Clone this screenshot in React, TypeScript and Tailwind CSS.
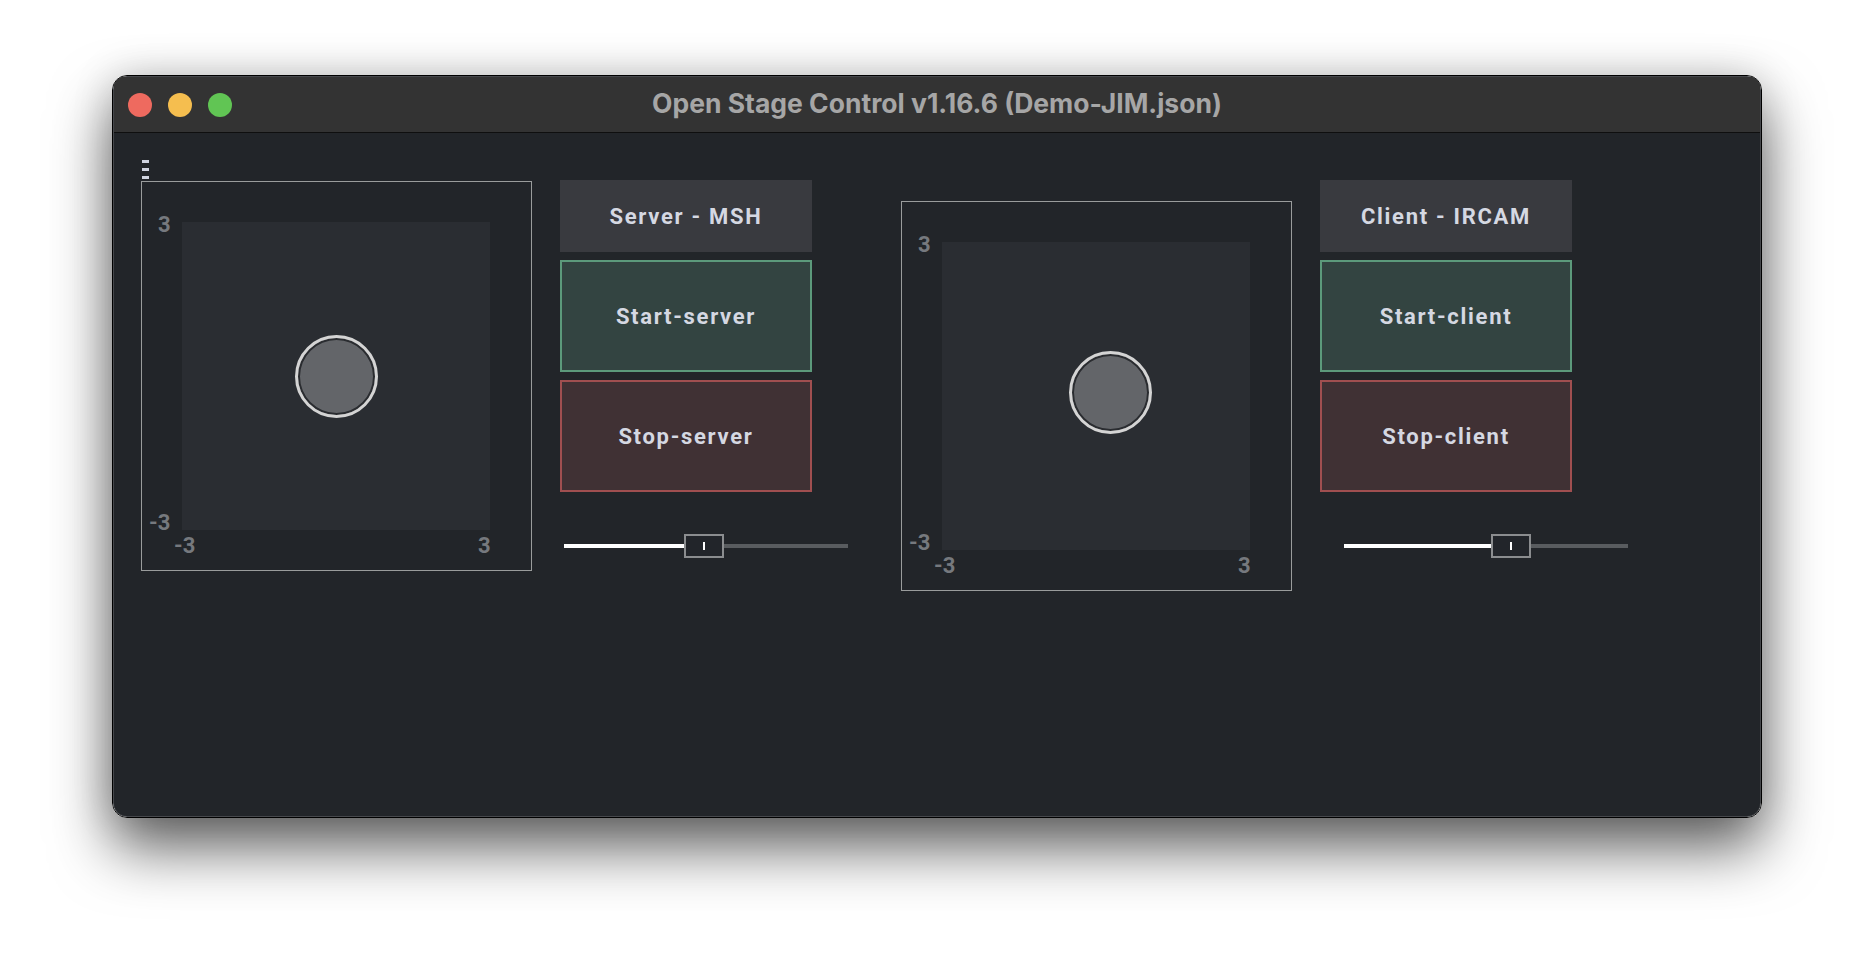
const widgetFont = { fontFamily: "Roboto, 'Noto Sans', sans-serif" };

function Dots() {
  return (
    <div className="ml-px flex w-[7px] flex-col gap-[5px]">
      <div className="h-[3px] bg-[#d0d4e0]" />
      <div className="h-[3px] bg-[#d0d4e0]" />
      <div className="h-[3px] bg-[#d0d4e0]" />
    </div>
  );
}

function XYPad({ knobLeft, knobTop }: { knobLeft: number; knobTop: number }) {
  const label = "absolute text-[22px] font-bold leading-none text-[#76797e]";
  return (
    <div className="relative h-[390px] w-[391px] border border-[#9a9c9c] pt-[40px] pl-[40px]" style={widgetFont}>
      <div className="relative h-[308px] w-[308px] bg-[#2a2d32]">
        <div
          className="absolute h-[83px] w-[83px] rounded-full border-[3px] border-[#d4d4d4] bg-[#636569] shadow-[inset_0_0_0_2px_#2a2c30]"
          style={{ left: knobLeft, top: knobTop }}
        />
      </div>
      <span className={`${label} left-[16px] top-[32px]`}>3</span>
      <span className={`${label} left-[7px] top-[330px]`}>-3</span>
      <span className={`${label} left-[32px] top-[353px]`}>-3</span>
      <span className={`${label} left-[336px] top-[353px]`}>3</span>
    </div>
  );
}

function Buttons({ title, start, stop }: { title: string; start: string; stop: string }) {
  const text = "text-[22px] font-bold tracking-[1.7px] text-[#d5d8e2]";
  return (
    <div className="flex w-[252px] flex-col gap-2" style={widgetFont}>
      <div className={`flex h-[72px] items-center justify-center bg-[#393a3f] ${text}`}>{title}</div>
      <div className={`flex h-[112px] items-center justify-center border-2 border-[#5c9a7b] bg-[#334441] ${text}`}>{start}</div>
      <div className={`flex h-[112px] items-center justify-center border-2 border-[#a04f50] bg-[#403134] ${text}`}>{stop}</div>
    </div>
  );
}

function Slider({ fill }: { fill: number }) {
  return (
    <div className="flex h-6 w-[284px] items-center">
      <div className="h-1 bg-white" style={{ width: fill }} />
      <div className="flex h-6 w-10 items-center justify-center border-2 border-[#8b8d8f] bg-[#22252a]">
        <div className="h-2 w-[2px] bg-white" />
      </div>
      <div className="h-1 flex-1 bg-[#595c5f]" />
    </div>
  );
}

export default function App() {
  return (
    <div className="min-h-screen w-full bg-white px-[112px] pt-[75px]">
      <div className="h-[743px] overflow-hidden rounded-[15px] border border-black shadow-[0_30px_60px_rgba(0,0,0,0.62),0_0_40px_rgba(0,0,0,0.15)]">
        <div className="flex h-full flex-col rounded-[14px] border border-[#ffffff2a] bg-[#222529]">
          <div className="relative flex h-[56px] shrink-0 items-center border-b border-[#0f0f0f] bg-[#333333]">
            <div className="ml-[14px] flex gap-4">
              <div className="h-6 w-6 rounded-full bg-[#ee6a5f]" />
              <div className="h-6 w-6 rounded-full bg-[#f5be4f]" />
              <div className="h-6 w-6 rounded-full bg-[#61c554]" />
            </div>
            <div
              className="absolute inset-x-0 -mt-[2px] text-center text-[26.5px] font-bold text-[#a6a6a6]"
              style={{ fontFamily: "Inter, 'Liberation Sans', sans-serif" }}
            >
              Open Stage Control v1.16.6 (Demo-JIM.json)
            </div>
          </div>
          <div className="flex flex-1 items-start">
            <div className="ml-[27px] flex flex-col pt-[27px]">
              <Dots />
              <div className="mt-[2px]">
                <XYPad knobLeft={112.5} knobTop={112.5} />
              </div>
            </div>
            <div className="ml-[28px] flex flex-col pt-[47px]">
              <Buttons title="Server - MSH" start="Start-server" stop="Stop-server" />
              <div className="ml-1 mt-[42px]">
                <Slider fill={120} />
              </div>
            </div>
            <div className="ml-[53px] mt-[68px]">
              <XYPad knobLeft={126.5} knobTop={108.5} />
            </div>
            <div className="ml-[28px] flex flex-col pt-[47px]">
              <Buttons title="Client - IRCAM" start="Start-client" stop="Stop-client" />
              <div className="ml-6 mt-[42px]">
                <Slider fill={147} />
              </div>
            </div>
          </div>
        </div>
      </div>
    </div>
  );
}
